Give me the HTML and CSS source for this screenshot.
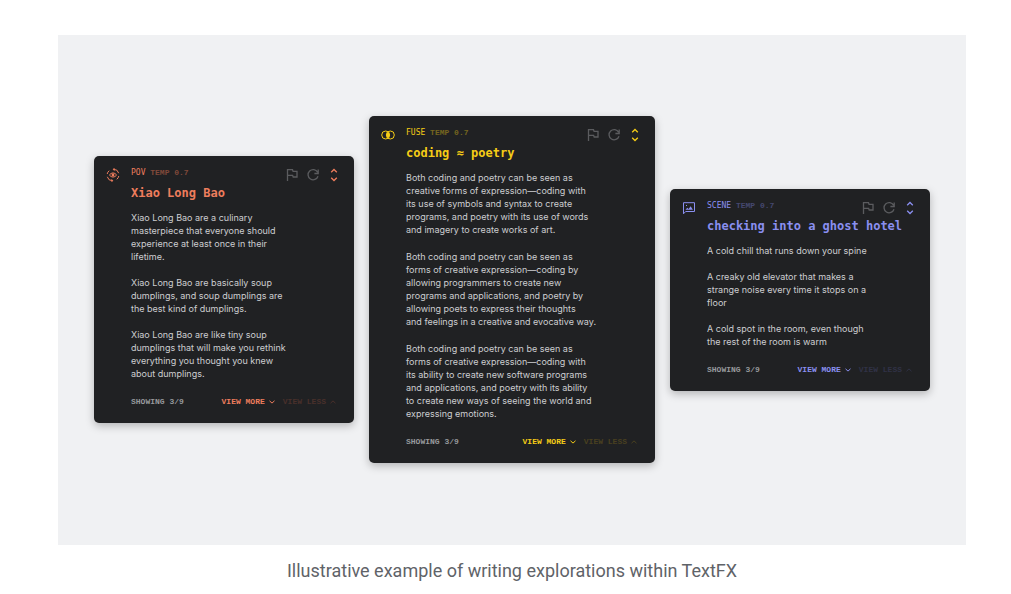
FILE: index.html
```html
<!DOCTYPE html>
<html lang="en">
<head>
<meta charset="utf-8">
<meta name="viewport" content="width=device-width, initial-scale=1">
<title>TextFX explorations</title>
<link rel="stylesheet" href="styles.css">
</head>
<body>
<svg class="sprite" aria-hidden="true">
  <symbol id="flag" viewBox="0 0 12 14"><path d="M1.500 13V1.700h5l.6 1.700h3.900v5.600H7.200l-.6-1.700H1.500"/></symbol>
  <symbol id="refresh" viewBox="0 0 14 14"><path d="M11.600 4.200A5.100 5.100 0 1 0 12 8.200M12.200 1.600v3.900H8.400"/></symbol>
  <symbol id="expand" viewBox="0 0 8 14"><path d="M1.200 4.200 4 1.500l2.800 2.700M1.200 9.800 4 12.500l2.800-2.700"/></symbol>
  <symbol id="down" viewBox="0 0 6 4"><path d="M.5.8 3 3.100 5.500.8"/></symbol>
  <symbol id="up" viewBox="0 0 6 4"><path d="M.5 3.200 3 .9l2.500 2.300"/></symbol>
</svg>
<figure class="figure">
  <div class="panel">
    <article class="card card-pov">
      <svg class="kind" viewBox="0 0 14 14" aria-hidden="true">
        <path d="M3.400 7Q4.900 4.900 7 4.900T10.600 7Q9.100 9.100 7 9.100T3.400 7Z"/>
        <circle class="solid" cx="7" cy="7" r="1.400"/>
        <path d="M7.200 1.200Q11.800 1.200 12.700 5.200M8.600.3 7.200 1.300l1.200 1.400M6.800 12.800Q2.200 12.800 1.300 8.800M5.400 13.700l1.400-1L5.600 11.300M1.200 6Q1.500 4 3.200 2.700M12.800 8Q12.500 10 10.800 11.300"/>
      </svg>
      <div class="content">
        <header class="head">
          <div class="heading">
            <p class="label">POV <span class="temp">TEMP 0.7</span></p>
            <h2 class="title">Xiao Long Bao</h2>
          </div>
          <div class="actions">
            <button class="action" aria-label="Flag"><svg class="i-flag"><use href="#flag"/></svg></button>
            <button class="action" aria-label="Regenerate"><svg class="i-refresh"><use href="#refresh"/></svg></button>
            <button class="action accent" aria-label="Collapse"><svg class="i-expand"><use href="#expand"/></svg></button>
          </div>
        </header>
        <div class="body">
          <p>Xiao Long Bao are a culinary masterpiece that everyone should experience at least once in their lifetime.</p>
          <p>Xiao Long Bao are basically soup dumplings, and soup dumplings are the best kind of dumplings.</p>
          <p>Xiao Long Bao are like tiny soup dumplings that will make you rethink everything you thought you knew about dumplings.</p>
        </div>
        <footer class="foot">
          <span class="count">SHOWING 3/9</span>
          <button class="more">VIEW MORE <svg class="i-chev"><use href="#down"/></svg></button>
          <button class="more less">VIEW LESS <svg class="i-chev"><use href="#up"/></svg></button>
        </footer>
      </div>
    </article>

    <article class="card card-fuse">
      <svg class="kind" viewBox="0 0 14 14" aria-hidden="true">
        <circle cx="4.700" cy="7" r="4"/><circle cx="9.300" cy="7" r="4"/>
        <path class="solid" d="M7 3.800a4 4 0 0 1 0 6.400a4 4 0 0 1 0-6.400Z"/>
      </svg>
      <div class="content">
        <header class="head">
          <div class="heading">
            <p class="label">FUSE <span class="temp">TEMP 0.7</span></p>
            <h2 class="title">coding ≈ poetry</h2>
          </div>
          <div class="actions">
            <button class="action" aria-label="Flag"><svg class="i-flag"><use href="#flag"/></svg></button>
            <button class="action" aria-label="Regenerate"><svg class="i-refresh"><use href="#refresh"/></svg></button>
            <button class="action accent" aria-label="Collapse"><svg class="i-expand"><use href="#expand"/></svg></button>
          </div>
        </header>
        <div class="body">
          <p>Both coding and poetry can be seen as creative forms of expression—coding with its use of symbols and syntax to create programs, and poetry with its use of words and imagery to create works of art.</p>
          <p>Both coding and poetry can be seen as forms of creative expression—coding by allowing programmers to create new programs and applications, and poetry by allowing poets to express their thoughts<br>and feelings in a creative and evocative way.</p>
          <p>Both coding and poetry can be seen as forms of creative expression—coding with its ability to create new software programs and applications, and poetry with its ability to create new ways of seeing the world and expressing emotions.</p>
        </div>
        <footer class="foot">
          <span class="count">SHOWING 3/9</span>
          <button class="more">VIEW MORE <svg class="i-chev"><use href="#down"/></svg></button>
          <button class="more less">VIEW LESS <svg class="i-chev"><use href="#up"/></svg></button>
        </footer>
      </div>
    </article>

    <article class="card card-scene">
      <svg class="kind" viewBox="0 0 14 14" aria-hidden="true">
        <path d="M1.500 12.800V1.700h11v8.800H3.700Z"/>
        <path class="solid" d="M3.500 8.700 5.300 6.700l1.300 1.200 2-2.600 2.300 3.400ZM4 4h1v1H4Z"/>
      </svg>
      <div class="content">
        <header class="head">
          <div class="heading">
            <p class="label">SCENE <span class="temp">TEMP 0.7</span></p>
            <h2 class="title">checking into a ghost hotel</h2>
          </div>
          <div class="actions">
            <button class="action" aria-label="Flag"><svg class="i-flag"><use href="#flag"/></svg></button>
            <button class="action" aria-label="Regenerate"><svg class="i-refresh"><use href="#refresh"/></svg></button>
            <button class="action accent" aria-label="Collapse"><svg class="i-expand"><use href="#expand"/></svg></button>
          </div>
        </header>
        <div class="body">
          <p>A cold chill that runs down your spine</p>
          <p>A creaky old elevator that makes a strange noise every time it stops on a floor</p>
          <p>A cold spot in the room, even though the rest of the room is warm</p>
        </div>
        <footer class="foot">
          <span class="count">SHOWING 3/9</span>
          <button class="more">VIEW MORE <svg class="i-chev"><use href="#down"/></svg></button>
          <button class="more less">VIEW LESS <svg class="i-chev"><use href="#up"/></svg></button>
        </footer>
      </div>
    </article>
  </div>
  <figcaption class="caption">Illustrative example of writing explorations within TextFX</figcaption>
</figure>
</body>
</html>
```

FILE: styles.css
```css
* { box-sizing: border-box; }
body { margin: 0; background: #fff; font-family: Inter, sans-serif; }
p, h2 { margin: 0; }
.sprite { display: none; }
svg { fill: none; stroke: currentColor; flex: none; }
button { border: 0; padding: 0; background: none; color: inherit; font: inherit; cursor: pointer; }

.figure { margin: 35px 45px 0 58px; }
.panel {
  display: grid;
  grid-template-columns: 260fr 286fr 260fr;
  gap: 15px;
  align-items: center;
  padding: 81px 36px 82px;
  background: #f0f1f3;
}
.caption {
  padding-top: 14px;
  text-align: center;
  font: 18px/24px Roboto, sans-serif;
  color: #5f6368;
}

.card {
  display: flex;
  gap: 11px;
  padding: 11px 13px 15px 12px;
  border-radius: 5px;
  background: #202123;
  box-shadow: 0 3px 8px rgba(0, 0, 0, 0.25);
}
.card-pov { --accent: #ee7d5d; --temp: #80493a; --less: #49302b; --measure: 160px; --gap: 13px; }
.card-fuse { --accent: #f5cc16; --temp: #75651f; --less: #494020; --measure: 192px; --gap: 14px; }
.card-scene { --accent: #8a8ff0; --temp: #45486f; --less: #303246; --measure: 164px; --gap: 13px; }

.kind { width: 14px; height: 14px; margin-top: 1px; color: var(--accent); }
.kind .solid { fill: currentColor; stroke: none; }
.content { flex: 1; min-width: 0; }
.head { display: flex; }
.heading { flex: 1; width: 0; white-space: nowrap; font-family: "DejaVu Sans Mono", monospace; color: var(--accent); }
.label { font-size: 8px; line-height: 12px; }
.temp { font-family: "Liberation Mono", monospace; font-weight: 700; color: var(--temp); }
.title { margin-top: 6px; font-size: 12px; line-height: 16px; font-weight: 700; }
.actions { display: flex; gap: 7px; height: 16px; align-items: center; color: #5b5c5f; }
.action { display: flex; justify-content: center; width: 14px; }
.actions svg { stroke-width: 1.3; }
.actions .accent { color: var(--accent); }
.i-flag { width: 12px; height: 14px; }
.i-refresh { width: 14px; height: 14px; }
.i-expand { width: 8px; height: 14px; }
.i-chev { width: 6px; height: 4px; }

.body {
  display: grid;
  gap: var(--gap);
  max-width: var(--measure);
  margin-top: 10px;
  font-size: 9px;
  line-height: 13px;
  color: #cdced1;
}
.foot {
  display: flex;
  gap: 8px;
  margin-top: 16px;
  padding-right: 5px;
  font: 700 8px/12px "Liberation Mono", monospace;
  color: #97999d;
}
.count { flex: 1; }
.more { display: flex; align-items: center; gap: 4px; color: var(--accent); }
.less { color: var(--less); }
```
